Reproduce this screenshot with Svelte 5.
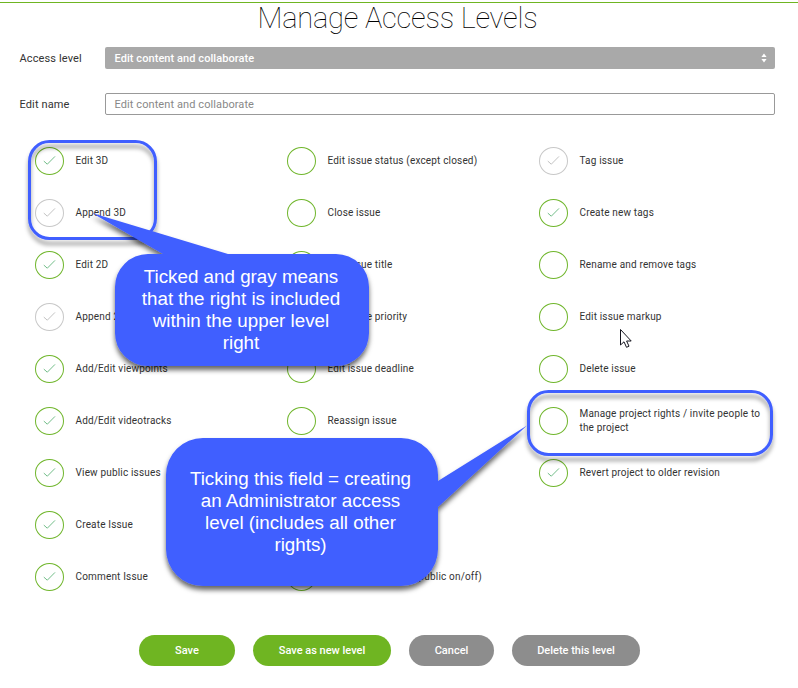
<script>
  const columns = [
    [
      { label: 'Edit 3D', state: 'on' },
      { label: 'Append 3D', state: 'implied' },
      { label: 'Edit 2D', state: 'on' },
      { label: 'Append 2D', state: 'implied' },
      { label: 'Add/Edit viewpoints', state: 'on' },
      { label: 'Add/Edit videotracks', state: 'on' },
      { label: 'View public issues', state: 'on' },
      { label: 'Create Issue', state: 'on' },
      { label: 'Comment Issue', state: 'on' }
    ],
    [
      { label: 'Edit issue status (except closed)', state: 'off' },
      { label: 'Close issue', state: 'off' },
      { label: 'Edit issue title', state: 'off' },
      { label: 'Edit issue priority', state: 'off' },
      { label: 'Edit issue deadline', state: 'off' },
      { label: 'Reassign issue', state: 'off' },
      { label: '', state: 'off' },
      { label: '', state: 'off' },
      { label: 'Edit issue visibility (public on/off)', state: 'off' }
    ],
    [
      { label: 'Tag issue', state: 'implied' },
      { label: 'Create new tags', state: 'on' },
      { label: 'Rename and remove tags', state: 'off' },
      { label: 'Edit issue markup', state: 'off' },
      { label: 'Delete issue', state: 'off' },
      { label: 'Manage project rights / invite people to the project', state: 'off' },
      { label: 'Revert project to older revision', state: 'on' }
    ]
  ];
  const first = ['Ticked and gray means', 'that the right is included', 'within the upper level', 'right'];
  const second = ['Ticking this field = creating', 'an Administrator access', 'level (includes all other', 'rights)'];
</script>

<main>
  <h1>Manage Access Levels</h1>
  <div class="field">
    <span class="name">Access level</span>
    <div class="select">
      <span>Edit content and collaborate</span>
      <svg width="6" height="10" viewBox="0 0 6 10"><path d="M.4 3.9 3 .5 5.6 3.9ZM.4 6 3 9.4 5.600 6Z" fill="#fff" /></svg>
    </div>
  </div>
  <div class="field second">
    <span class="name">Edit name</span>
    <div class="input">Edit content and collaborate</div>
  </div>

  <div class="rights">
    {#each columns as items}
      <div class="column">
        {#each items as item}
          <div class="right">
            <span class="circle {item.state}">
              {#if item.state !== 'off'}
                <svg width="13" height="10" viewBox="0 0 13 10"><path d="M.8 5.1 4.3 8.2 12 .4" /></svg>
              {/if}
            </span>
            <span class="label">{item.label}</span>
          </div>
        {/each}
      </div>
    {/each}
  </div>

  <div class="buttons">
    <button class="save">Save</button>
    <button class="save-new">Save as new level</button>
    <button class="gray cancel">Cancel</button>
    <button class="gray delete">Delete this level</button>
  </div>

  <svg class="notes" width="798" height="688" viewBox="0 0 798 688">
    <defs>
      <filter id="shadow" filterUnits="userSpaceOnUse" x="0" y="0" width="798" height="688">
        <feDropShadow dx="0" dy="4" stdDeviation="2.5" flood-color="#000" flood-opacity="0.6" />
      </filter>
      <filter id="soft" filterUnits="userSpaceOnUse" x="0" y="0" width="798" height="688">
        <feDropShadow dx="0" dy="5" stdDeviation="2" flood-color="#000" flood-opacity="0.4" />
      </filter>
    </defs>
    <g class="frame" filter="url(#soft)">
      <rect x="29.5" y="141.5" width="126" height="97" rx="20" />
      <rect x="528.5" y="391.5" width="243" height="63" rx="20" />
    </g>
    <g class="bubble" filter="url(#shadow)">
      <path d="M148 254H163L92 213L228 254H336A33 33 0 0 1 369 287V333A33 33 0 0 1 336 366H148A33 33 0 0 1 115 333V287A33 33 0 0 1 148 254Z" />
      <path d="M203 438H401A37 37 0 0 1 438 475V481L527 425.500L438 507V549A37 37 0 0 1 401 586H203A37 37 0 0 1 166 549V475A37 37 0 0 1 203 438Z" />
    </g>
    {#each first as line, i}
      <text x="241" y={283 + i * 22}>{line}</text>
    {/each}
    {#each second as line, i}
      <text x="300.5" y={485 + i * 22}>{line}</text>
    {/each}
    <path d="M620.500 329.500V345L624 341.800 626.500 347.300 629 346.200 626.600 341H631.200Z" fill="#fff" stroke="#15151f" />
  </svg>
</main>

<style>
  :global(body) { background: #fff; }
  main {
    position: relative;
    box-sizing: border-box;
    width: 798px;
    height: 688px;
    overflow: hidden;
    padding-top: 2px;
    font-family: Roboto, sans-serif;
    color: #333;
  }
  main::before { content: ''; display: block; height: 1px; background: #6fb522; }
  h1 {
    margin: 0;
    height: 44px;
    padding-right: 3px;
    line-height: 30px;
    text-align: center;
    font-size: 29px;
    font-weight: 100;
    letter-spacing: -0.2px;
    color: #000;
  }
  .field { display: flex; align-items: center; height: 22px; padding-left: 19.5px; font-size: 11px; }
  .second { margin-top: 24px; }
  .name { width: 85.5px; letter-spacing: 0.12px; }
  .select, .input {
    box-sizing: border-box;
    display: flex;
    align-items: center;
    justify-content: space-between;
    width: 670px;
    height: 22px;
    padding: 0 8px 0 9.5px;
    border-radius: 2px;
    letter-spacing: 0.07px;
  }
  .select { background: #a9a9a9; color: #fff; font-weight: 500; }
  .input { border: 1px solid #999; padding-left: 8.5px; color: #888; letter-spacing: 0.09px; }
  .rights { display: flex; height: 500px; margin-top: 20px; padding-left: 35px; }
  .column { width: 252px; }
  .right { display: flex; align-items: center; height: 52px; gap: 11.5px; }
  .circle {
    box-sizing: border-box;
    display: flex;
    align-items: center;
    justify-content: center;
    flex: none;
    width: 29px;
    height: 28px;
    border: 1px solid #70b62c;
    border-radius: 50%;
  }
  .circle.implied { border-color: #c8c8c8; }
  .circle svg { fill: none; stroke: #62b57a; stroke-width: 0.9; }
  .circle.implied svg { stroke: #bbb; }
  .label { width: 190px; font-size: 10px; line-height: 14px; letter-spacing: 0.17px; }
  .buttons { display: flex; gap: 18px; padding-left: 139px; }
  button {
    height: 31px;
    padding: 0;
    border: 0;
    border-radius: 16px;
    background: #6fb522;
    color: #fff;
    font: 500 11px Roboto, sans-serif;
  }
  .save { width: 96px; }
  .save-new { width: 138px; }
  .gray { background: #8d8d8d; }
  .cancel { width: 85px; }
  .delete { width: 128px; }
  .notes { position: absolute; left: 0; top: 0; }
  .frame rect { fill: none; stroke: #415eff; stroke-width: 3; }
  .bubble path { fill: #415eff; }
  text { font: 18.8px 'Liberation Sans', Arial, sans-serif; fill: #fff; text-anchor: middle; }
</style>
